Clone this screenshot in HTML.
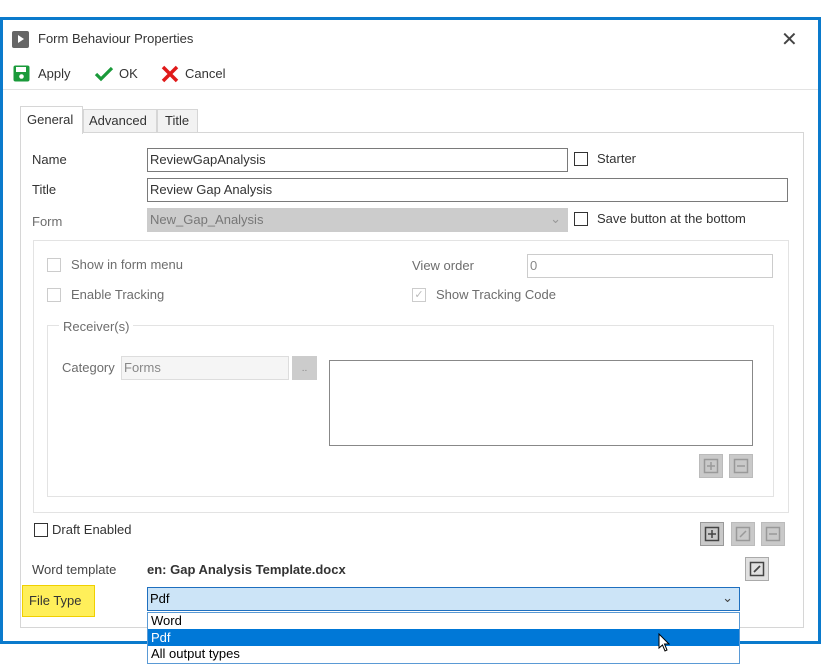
<!DOCTYPE html>
<html><head><style>
*{box-sizing:border-box;margin:0;padding:0}
body{width:821px;height:665px;background:#fff;font-family:"Liberation Sans",sans-serif;font-size:13px;color:#333;position:relative;overflow:hidden}
.a{position:absolute}
.tb{position:absolute;border:1px solid #7a7a7a;background:#fff;padding:3px 2px;height:24px;line-height:16px;font-size:13px}
.cb{position:absolute;width:14px;height:14px;border:1px solid #333;background:#fff}
.cbd{position:absolute;width:14px;height:14px;border:1px solid #ccc;background:#fff}
.g{color:#6d6d6d}
.btn{position:absolute;width:24px;height:24px;background:#c9c9c9;border:1px solid #bbb}
.btn svg{position:absolute;left:3px;top:3px}
</style></head><body>
<div class="a" style="left:0;top:17px;width:821px;height:627px;border:3px solid #0a7acc;background:#fff"></div>
<div class="a" style="left:12px;top:31px;width:17px;height:17px;background:#666;border-radius:2px"></div>
<div class="a" style="left:18px;top:35px;width:0;height:0;border-left:6px solid #fff;border-top:4.5px solid transparent;border-bottom:4.5px solid transparent"></div>
<div class="a" style="left:38px;top:31px">Form Behaviour Properties</div>
<div class="a" style="left:781px;top:27px;font-size:20px;color:#444">✕</div>
<svg class="a" style="left:13px;top:65px" width="17" height="17"><rect x="0.5" y="0.5" width="16" height="16" rx="2" fill="#1a9a3a"/><rect x="3" y="2" width="10" height="5" fill="#fff"/><circle cx="8.5" cy="11.5" r="2.3" fill="#fff"/></svg>
<div class="a" style="left:38px;top:66px">Apply</div>
<svg class="a" style="left:94px;top:66px" width="20" height="16"><path d="M2 8 L7 13 L18 2" stroke="#1a9a3a" stroke-width="3.2" fill="none"/></svg>
<div class="a" style="left:119px;top:66px">OK</div>
<svg class="a" style="left:161px;top:65px" width="18" height="18"><path d="M2 2 L16 16 M16 2 L2 16" stroke="#e01a1a" stroke-width="3.5"/></svg>
<div class="a" style="left:185px;top:66px">Cancel</div>
<div class="a" style="left:3px;top:89px;width:815px;height:1px;background:#e3e3e3"></div>
<div class="a" style="left:20px;top:132px;width:784px;height:496px;border:1px solid #d6d6d6;background:#fff"></div>
<div class="a" style="left:83px;top:109px;width:74px;height:24px;border:1px solid #d6d6d6;background:#f2f2f2;padding:3px 5px">Advanced</div>
<div class="a" style="left:157px;top:109px;width:41px;height:24px;border:1px solid #d6d6d6;background:#f2f2f2;padding:3px 7px">Title</div>
<div class="a" style="left:20px;top:106px;width:63px;height:28px;border:1px solid #d6d6d6;border-bottom:none;background:#fff;padding:5px 6px">General</div>
<div class="a" style="left:32px;top:152px">Name</div>
<div class="tb" style="left:147px;top:148px;width:421px">ReviewGapAnalysis</div>
<div class="cb" style="left:574px;top:152px"></div>
<div class="a" style="left:597px;top:151px">Starter</div>
<div class="a" style="left:32px;top:182px">Title</div>
<div class="tb" style="left:147px;top:178px;width:641px">Review Gap Analysis</div>
<div class="a g" style="left:32px;top:214px">Form</div>
<div class="tb" style="left:147px;top:208px;width:421px;background:#ccc;border-color:#ccc;color:#777">New_Gap_Analysis<span style="position:absolute;right:6px;top:2px;color:#999">⌄</span></div>
<div class="cb" style="left:574px;top:212px"></div>
<div class="a" style="left:597px;top:211px">Save button at the bottom</div>
<div class="a" style="left:33px;top:240px;width:756px;height:273px;border:1px solid #e3e3e3"></div>
<div class="cbd" style="left:47px;top:258px"></div>
<div class="a g" style="left:71px;top:257px">Show in form menu</div>
<div class="cbd" style="left:47px;top:288px"></div>
<div class="a g" style="left:71px;top:287px">Enable Tracking</div>
<div class="a g" style="left:412px;top:258px">View order</div>
<div class="tb" style="left:527px;top:254px;width:246px;border-color:#ccc;color:#888">0</div>
<div class="cbd" style="left:412px;top:288px;color:#bbb;font-size:11px;line-height:12px;text-align:center">✓</div>
<div class="a g" style="left:436px;top:287px">Show Tracking Code</div>
<div class="a" style="left:47px;top:325px;width:727px;height:172px;border:1px solid #e3e3e3"></div>
<div class="a g" style="left:59px;top:319px;background:#fff;padding:0 4px">Receiver(s)</div>
<div class="a g" style="left:62px;top:360px">Category</div>
<div class="tb" style="left:121px;top:356px;width:168px;border-color:#ddd;background:#f5f5f5;color:#888">Forms</div>
<div class="a" style="left:292px;top:356px;width:25px;height:24px;background:#ccc;color:#888;text-align:center;font-size:10px;line-height:26px">..</div>
<div class="a" style="left:329px;top:360px;width:424px;height:86px;border:1px solid #888"></div>
<div class="btn" style="left:699px;top:454px"><svg width="16" height="16"><rect x="1.5" y="1.5" width="13" height="13" fill="none" stroke="#999" stroke-width="1.5"/><path d="M8 4V12M4 8H12" stroke="#999" stroke-width="1.5"/></svg></div>
<div class="btn" style="left:729px;top:454px"><svg width="16" height="16"><rect x="1.5" y="1.5" width="13" height="13" fill="none" stroke="#999" stroke-width="1.5"/><path d="M4 8H12" stroke="#999" stroke-width="1.5"/></svg></div>
<div class="cb" style="left:34px;top:523px"></div>
<div class="a" style="left:52px;top:522px">Draft Enabled</div>
<div class="btn" style="left:700px;top:522px;border-color:#999"><svg width="16" height="16"><rect x="1.5" y="1.5" width="13" height="13" fill="none" stroke="#444" stroke-width="1.5"/><path d="M8 4V12M4 8H12" stroke="#444" stroke-width="1.5"/></svg></div>
<div class="btn" style="left:731px;top:522px"><svg width="16" height="16"><rect x="1.5" y="1.5" width="13" height="13" fill="none" stroke="#999" stroke-width="1.5"/><path d="M5 11L11 5" stroke="#999" stroke-width="1.5"/></svg></div>
<div class="btn" style="left:761px;top:522px"><svg width="16" height="16"><rect x="1.5" y="1.5" width="13" height="13" fill="none" stroke="#999" stroke-width="1.5"/><path d="M4 8H12" stroke="#999" stroke-width="1.5"/></svg></div>
<div class="a" style="left:32px;top:562px;color:#444">Word template</div>
<div class="a" style="left:147px;top:562px;font-weight:bold;color:#333">en: Gap Analysis Template.docx</div>
<div class="btn" style="left:745px;top:557px;background:#e0e0e0;border-color:#aaa"><svg width="16" height="16"><rect x="1.5" y="1.5" width="13" height="13" fill="none" stroke="#444" stroke-width="1.5"/><path d="M5 11L11 5" stroke="#444" stroke-width="1.8"/></svg></div>
<div class="a" style="left:22px;top:585px;width:73px;height:32px;background:#ffef5a;border:1px solid #f0d000;padding:7px 6px;color:#333">File Type</div>
<div class="tb" style="left:147px;top:587px;width:593px;background:#cce4f7;border-color:#1e6fbf;color:#000">Pdf<span style="position:absolute;right:6px;top:2px;color:#444">⌄</span></div>
<div class="a" style="left:147px;top:612px;width:593px;height:52px;border:1px solid #5a9ad5;background:#fff;color:#000">
<div style="height:16px;line-height:16px;padding-left:3px">Word</div>
<div style="height:17px;line-height:17px;padding-left:3px;background:#0078d7;color:#fff">Pdf</div>
<div style="height:16px;line-height:16px;padding-left:3px">All output types</div>
</div>
<svg class="a" style="left:658px;top:633px" width="12" height="20"><path d="M1 1 L1 15 L4.5 12 L7 18 L9 17 L6.5 11 L11 11 Z" fill="#fff" stroke="#000"/></svg>
</body></html>
